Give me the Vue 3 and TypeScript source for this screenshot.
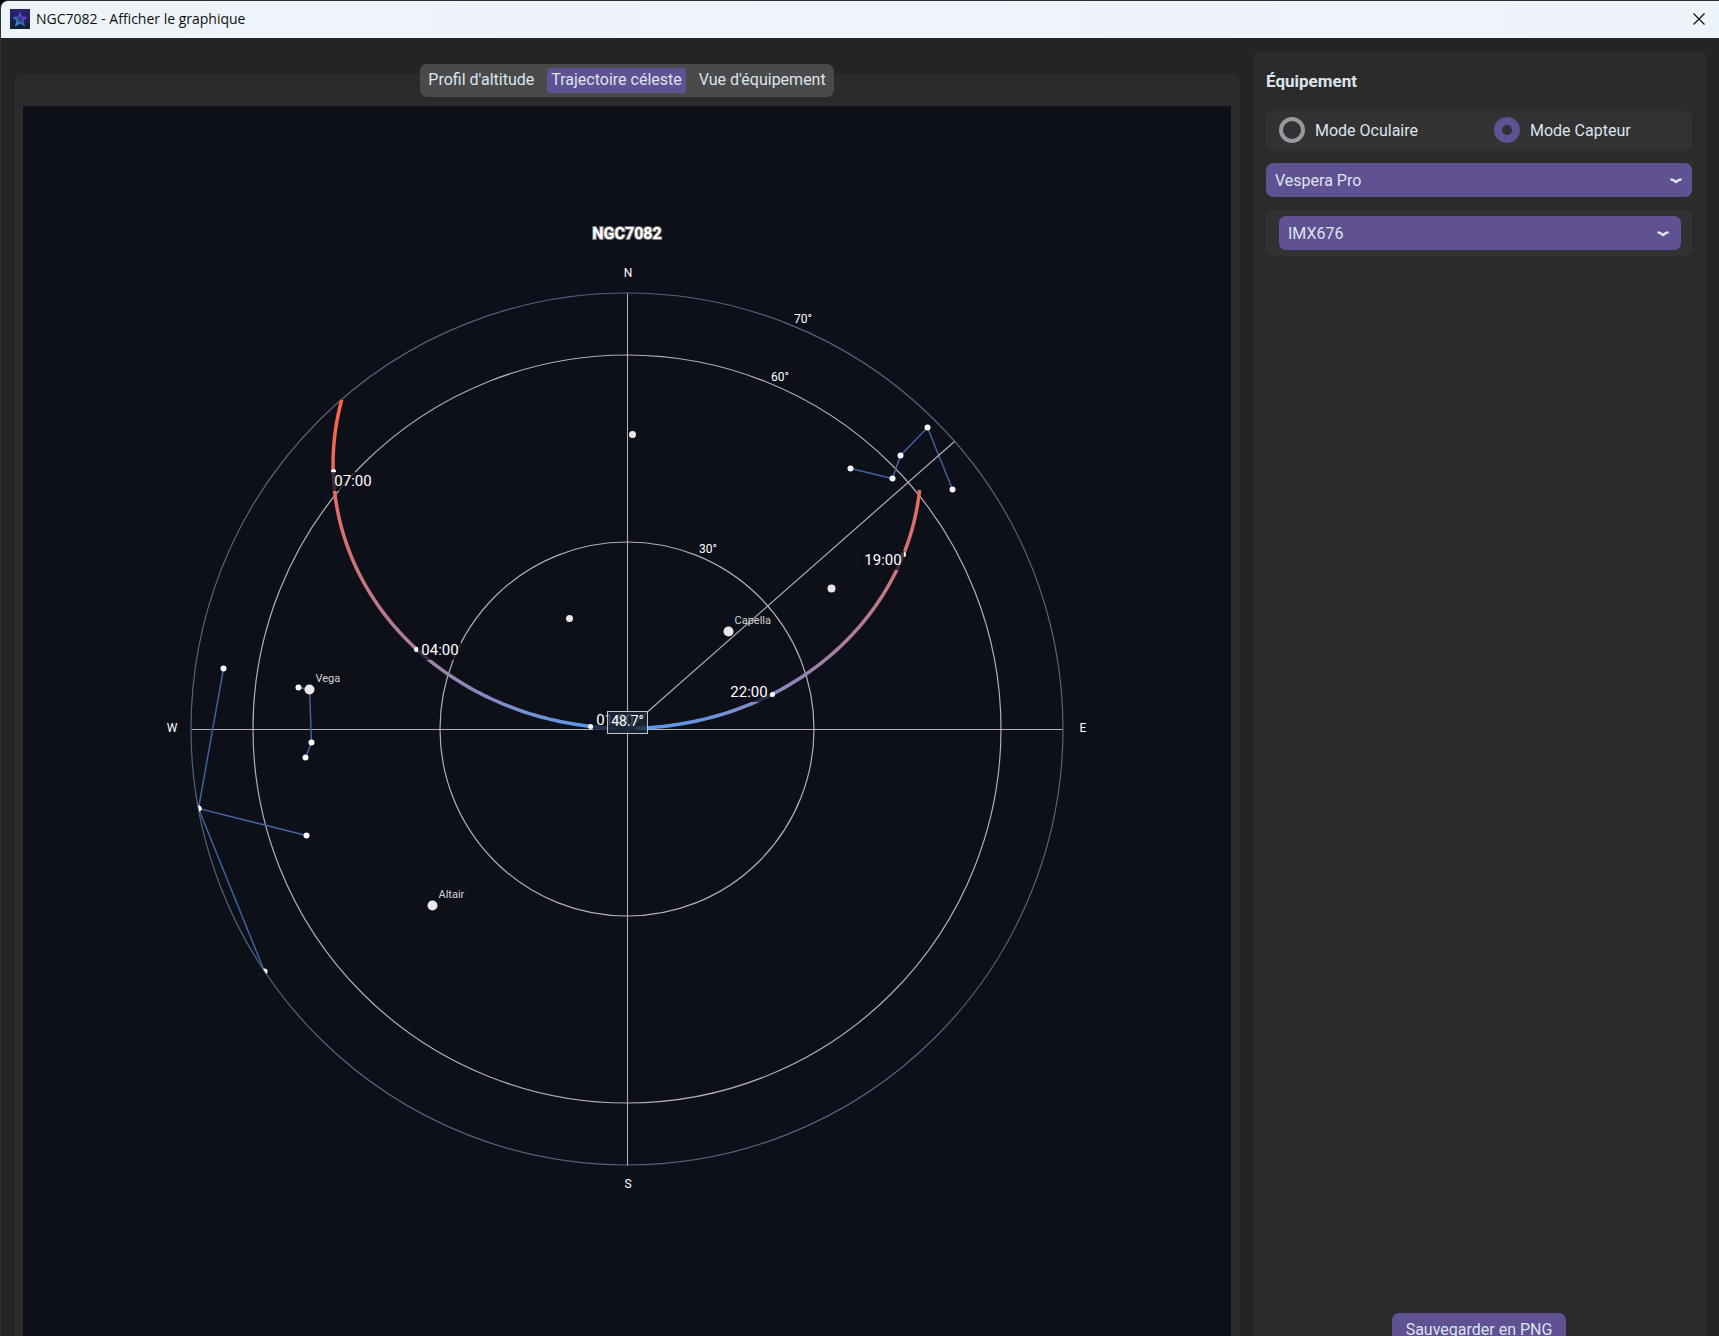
<script setup lang="ts">
import { ref } from 'vue'

type Point = [number, number]

interface Star {
  x: number
  y: number
  r: number
  name?: string
}

const tabs = ["Profil d'altitude", 'Trajectoire céleste', "Vue d'équipement"]
const activeTab = ref(1)
const mode = ref('capteur')
const telescope = ref('Vespera Pro')
const sensor = ref('IMX676')

/* Polar chart, zenith at the origin, horizon mask at 70° from it */
const horizon = 436
const rings = [187, 374]
const ringLabels = [
  { x: 72, y: -176, text: '30°' },
  { x: 144, y: -348, text: '60°' },
  { x: 167, y: -406, text: '70°' },
]

const cardinals = [
  { x: 1, y: -452, text: 'N' },
  { x: 1, y: 459, text: 'S' },
  { x: 456, y: 3, text: 'E' },
  { x: -455, y: 3, text: 'W' },
]

const constellations: Point[][] = [
  [[223, -261], [265, -251], [273, -274], [300, -302], [325, -240]],
  [[-329, -42], [-318, -40], [-316, 13], [-322, 28]],
  [[-404, -61], [-429, 79], [-321, 106]],
  [[-429, 79], [-363, 242]],
]

const stars: Star[] = [
  { x: 5, y: -295, r: 3.5 },
  { x: -58, y: -111, r: 3.5 },
  { x: 204, y: -141, r: 4 },
  { x: 101, y: -98, r: 5, name: 'Capella' },
  { x: -318, y: -40, r: 5, name: 'Vega' },
  { x: -195, y: 176, r: 5, name: 'Altair' },
]

const hours = [
  { text: '07:00', at: [-294, -258], box: [-296, -257] },
  { text: '04:00', at: [-211, -80], box: [-209, -88] },
  { text: '01:00', at: [-37, -3], box: [-34, -18] },
  { text: '22:00', at: [145, -35], box: [100, -46] },
  { text: '19:00', at: [276, -175], box: [234, -178] },
]

/* Path of the object across the sky, from its hour angle in degrees */
const rad = Math.PI / 180
const latitude = 47.15 * rad
const declination = 47.25 * rad

function project(hourAngle: number): string {
  const h = hourAngle * rad
  const east = -Math.cos(declination) * Math.sin(h)
  const north =
    Math.sin(declination) * Math.cos(latitude) -
    Math.cos(declination) * Math.sin(latitude) * Math.cos(h)
  const up =
    Math.sin(declination) * Math.sin(latitude) +
    Math.cos(declination) * Math.cos(latitude) * Math.cos(h)
  const radius = (Math.acos(up) / rad / 70) * horizon
  const flat = Math.hypot(east, north)
  return `${((east / flat) * radius).toFixed(2)},${((-north / flat) * radius).toFixed(2)}`
}

const track = Array.from({ length: 212 }, (_, i) => project(i - 96)).join(' ')
</script>

<template>
  <div class="window">
    <header class="titlebar">
      <svg class="app-icon" viewBox="0 0 20 20" aria-hidden="true">
        <defs>
          <linearGradient id="iconBg" x1="0" y1="0" x2="0" y2="1">
            <stop offset="0" stop-color="#2c2478" />
            <stop offset="1" stop-color="#10202f" />
          </linearGradient>
          <linearGradient id="iconStar" x1="1" y1="0" x2="0" y2="1">
            <stop offset="0.2" stop-color="#8a2be2" />
            <stop offset="0.5" stop-color="#3a55b8" />
            <stop offset="1" stop-color="#28c8e8" />
          </linearGradient>
        </defs>
        <rect width="20" height="20" fill="url(#iconBg)" />
        <path d="M10 2.5l2.2 5 5.3.5-4 3.6 1.6 5.9L10 14.6l-5 2.9 1.4-5.9-4-3.6 5.4-.5z" fill="url(#iconStar)" />
        <circle cx="10" cy="10.5" r="2.4" fill="#34386a" />
        <circle cx="10" cy="10.5" r="1" fill="#555" />
      </svg>
      <h1 class="window-title">NGC7082 - Afficher le graphique</h1>
      <button class="close" type="button" aria-label="Fermer">
        <svg viewBox="0 0 12 12" width="12" height="12"><path d="M.5.5l11 11M11.5.5l-11 11" stroke="#111" stroke-width="1.2" /></svg>
      </button>
    </header>

    <main class="content">
      <section class="viewer">
        <nav class="tabs" role="tablist">
          <button
            v-for="(tab, i) in tabs"
            :key="tab"
            type="button"
            role="tab"
            class="tab"
            :class="{ active: i === activeTab }"
            :aria-selected="i === activeTab"
            @click="activeTab = i"
          >{{ tab }}</button>
        </nav>

        <div class="panel">
          <svg class="chart" viewBox="-604 -623 1208 1247" role="img" aria-label="Trajectoire céleste de NGC7082">
            <defs>
              <radialGradient id="altitude" gradientUnits="userSpaceOnUse" cx="0" cy="0" :r="horizon">
                <stop offset="0" stop-color="#4a9eff" />
                <stop offset="1" stop-color="#ff6347" />
              </radialGradient>
              <clipPath id="sky"><circle :r="horizon" /></clipPath>
            </defs>

            <circle class="horizon" :r="horizon" />
            <circle v-for="r in rings" :key="r" class="ring" :r="r" />

            <g transform="translate(0.5 0.5)">
              <path class="axis" d="M0 -436V436M-436 0H435" />

              <g clip-path="url(#sky)">
                <polyline v-for="(c, i) in constellations" :key="i" class="link" :points="c.join(' ')" />
                <template v-for="(c, i) in constellations" :key="i">
                  <circle v-for="(p, j) in c" :key="j" class="minor" :cx="p[0]" :cy="p[1]" r="3" />
                </template>
              </g>
            </g>

            <polyline class="track" :points="track" stroke="url(#altitude)" />

            <g transform="translate(0.5 0.5)">
              <path class="ring" d="M0 0L327 -288" />

              <g v-for="s in stars" :key="s.x">
                <circle class="star" :cx="s.x" :cy="s.y" :r="s.r" />
                <text v-if="s.name" class="star-name" :x="s.x + 6" :y="s.y - 8">{{ s.name }}</text>
              </g>

              <circle v-for="h in hours" :key="h.text" class="tick" :cx="h.at[0]" :cy="h.at[1]" r="2.5" />
            </g>

            <g v-for="h in hours" :key="h.text">
              <rect class="hour-box" :x="h.box[0]" :y="h.box[1]" width="43" height="19" />
              <text class="hour" :x="h.box[0] + 22" :y="h.box[1] + 14">{{ h.text }}</text>
            </g>

            <text v-for="l in ringLabels" :key="l.text" class="label" :x="l.x" :y="l.y">{{ l.text }}</text>
            <text v-for="c in cardinals" :key="c.text" class="label middle" :x="c.x" :y="c.y">{{ c.text }}</text>

            <g transform="translate(0.5 0.5)">
              <rect class="badge" x="-20" y="-18" width="40" height="22" />
              <text class="badge-text" x="0" y="-4">48.7°</text>
            </g>

            <text class="chart-title" x="0" y="-490">NGC7082</text>
          </svg>
        </div>
      </section>

      <aside class="equipment">
        <h2 class="heading">Équipement</h2>

        <div class="modes">
          <label class="mode"><input v-model="mode" type="radio" name="mode" value="oculaire" /><span>Mode Oculaire</span></label>
          <label class="mode"><input v-model="mode" type="radio" name="mode" value="capteur" /><span>Mode Capteur</span></label>
        </div>

        <div class="picker">
          <select v-model="telescope" aria-label="Télescope">
            <option>Vespera Pro</option>
          </select>
          <svg class="chevron" viewBox="0 0 12 8"><path d="M1.5 2.5Q3 2.5 6 5Q9 2.5 10.5 2.5" /></svg>
        </div>

        <div class="sensor">
          <div class="picker">
            <select v-model="sensor" aria-label="Capteur">
              <option>IMX676</option>
            </select>
            <svg class="chevron" viewBox="0 0 12 8"><path d="M1.5 2.5Q3 2.5 6 5Q9 2.5 10.5 2.5" /></svg>
          </div>
        </div>

        <button class="save" type="button">Sauvegarder en PNG</button>
      </aside>
    </main>
  </div>
</template>

<style>
html,
body {
  height: 100%;
  margin: 0;
  overflow: hidden;
  background: #000;
}
</style>

<style scoped>
.window {
  box-sizing: border-box;
  display: flex;
  flex-direction: column;
  height: calc(100vh + 39px);
  overflow: hidden;
  border: solid #2f2f2f;
  border-width: 1px 0 0 1px;
  border-radius: 8px 0 0 0;
  background: #242424;
  color: #dce4ee;
  font: 16px/20px Roboto, sans-serif;
}

.titlebar {
  box-sizing: border-box;
  display: flex;
  align-items: center;
  flex: none;
  gap: 6px;
  height: 37px;
  padding: 0 14px 1px 9px;
  background: linear-gradient(90deg, #edf4f8, #eff3fb 50%, #edf4f9);
}

.app-icon {
  width: 20px;
  height: 20px;
}

.window-title {
  flex: 1;
  margin: 0;
  color: #111;
  font: 400 14px/20px "Open Sans", "Noto Sans", sans-serif;
}

.close {
  display: flex;
  padding: 0;
  border: 0;
  background: none;
}

.content {
  display: flex;
  flex: 1;
  gap: 13px;
  min-height: 0;
  padding: 13px 12px 13px 13px;
}

.viewer {
  display: flex;
  flex: 1;
  flex-direction: column;
  min-width: 0;
  padding-top: 13px;
}

.tabs {
  z-index: 1;
  display: flex;
  align-self: center;
  gap: 9px;
  margin-bottom: -23px;
  padding: 4px;
  border-radius: 7px;
  background: #4a4a4a;
}

.tab {
  height: 25px;
  padding: 0 4px 2px;
  border: 0;
  border-radius: 3px;
  background: none;
  color: #dce4ee;
  font: inherit;
}

.tab.active {
  background: #5f5192;
}

.panel {
  display: flex;
  flex: 1;
  min-height: 0;
  padding: 32px 9px 9px;
  border-radius: 7px;
  background: #2b2b2b;
}

.chart {
  flex: 1;
  min-width: 0;
  background: #0d0f19;
  font-family: Roboto, sans-serif;
}

.horizon,
.ring,
.axis,
.link,
.track {
  fill: none;
}

.horizon {
  stroke: #56637c;
  stroke-width: 1.2;
}

.ring {
  stroke: #b0b0b0;
  stroke-width: 1.2;
}

.axis {
  stroke: #b4b4b4;
}

.link {
  stroke: #41619f;
  stroke-width: 1.5;
}

.track {
  stroke-width: 3.5;
}

.minor,
.tick {
  fill: #fafafa;
}

.star {
  fill: #e8e8e8;
}

.star-name {
  fill: #d4d4d4;
  font-size: 11px;
}

.hour-box {
  fill: #0d0f19;
  fill-opacity: 0.75;
}

.hour {
  fill: #fff;
  font-size: 15px;
  text-anchor: middle;
}

.label {
  fill: #fff;
  font-size: 12px;
}

.middle {
  text-anchor: middle;
}

.badge {
  fill: #1c2836;
  fill-opacity: 0.8;
  stroke: #c0c8ce;
}

.badge-text {
  fill: #fff;
  font-size: 14px;
  text-anchor: middle;
}

.chart-title {
  fill: #fff;
  stroke: #777;
  stroke-width: 2px;
  paint-order: stroke;
  font-size: 16px;
  font-weight: 700;
  text-anchor: middle;
}

.equipment {
  box-sizing: border-box;
  display: flex;
  flex: none;
  flex-direction: column;
  gap: 12px;
  width: 454px;
  padding: 14px 15px 15px 13px;
  border-radius: 7px;
  background: #2b2b2b;
}

.heading {
  margin: 0;
  padding-bottom: 2px;
  font-size: 17px;
  font-weight: 700;
  line-height: 32px;
}

.modes {
  display: grid;
  grid-template-columns: 1fr 1fr;
  gap: 30px;
  padding: 6px 13px 8px;
  border-radius: 7px;
  background: #323232;
}

.mode {
  display: flex;
  align-items: center;
  gap: 10px;
}

.mode span {
  padding-top: 2px;
}

.mode input {
  box-sizing: border-box;
  width: 26px;
  height: 26px;
  margin: 0;
  border: 4px solid #949a9f;
  border-radius: 50%;
  appearance: none;
}

.mode input:checked {
  border: 8px solid #5f5192;
}

.picker {
  position: relative;
  display: flex;
}

.picker select {
  flex: 1;
  height: 34px;
  padding: 2px 9px 0;
  border: 0;
  border-radius: 7px;
  background: #5f5192;
  color: #dce4ee;
  font: inherit;
  appearance: none;
}

.chevron {
  position: absolute;
  top: 14px;
  right: 10px;
  width: 12px;
  height: 8px;
  pointer-events: none;
}

.chevron path {
  fill: none;
  stroke: #dce4ee;
  stroke-width: 2.6;
  stroke-linecap: round;
  stroke-linejoin: round;
}

.sensor {
  margin-top: 1px;
  padding: 6px 11px 6px 13px;
  border-radius: 7px;
  background: #323232;
}

.sensor .chevron {
  right: 12px;
}

.save {
  align-self: center;
  height: 34px;
  margin-top: auto;
  padding: 0 14px;
  border: 0;
  border-radius: 7px;
  background: #5f5192;
  color: #dce4ee;
  font: inherit;
}
</style>
